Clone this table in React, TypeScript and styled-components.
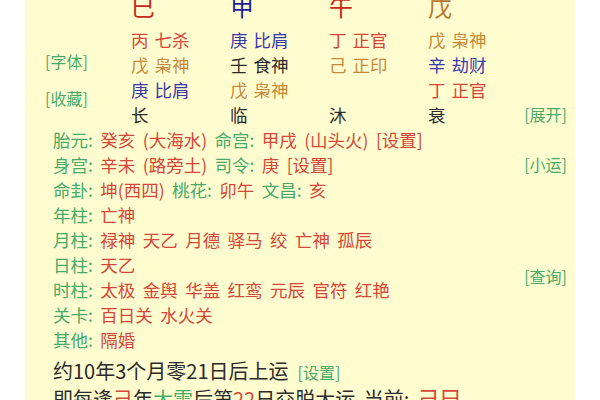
import React from "react";
import styled, { createGlobalStyle } from "styled-components";

const Global = createGlobalStyle`
  html, body { margin: 0; padding: 0; background: #ffffff; overflow: hidden; }
  body { font-family: "Noto Sans CJK SC", "Noto Sans", sans-serif; }
`;

const C = {
  red: "#d4473a",
  green: "#47aa6a",
  blue: "#3a3aa8",
  brown: "#c6893a",
  dark: "#2b2b2b",
  bigRed: "#c9281c",
  bigBlue: "#1d1f9a",
  bigBrown: "#b8782c",
};

const Panel = styled.div`
  width: 550px;
  height: 100vh;
  margin: 0 auto;
  background: #fffdd0;
  overflow: hidden;
  box-sizing: border-box;
`;

const PillarGrid = styled.div`
  display: grid;
  grid-template-columns: 86px 99px 99px 99px 1fr;
  grid-template-rows: 37px repeat(4, 25px);
  margin-top: -10px;
  padding: 0 8px 0 20px;
`;

const BigChar = styled.div<{ $color: string; $col: number }>`
  grid-row: 1;
  grid-column: ${(p) => p.$col};
  align-self: start;
  font-size: 24px;
  line-height: 32px;
  color: ${(p) => p.$color};
`;

const Cell = styled.div<{ $color: string; $col: number; $row: number }>`
  grid-row: ${(p) => p.$row};
  grid-column: ${(p) => p.$col};
  font-size: 17.5px;
  line-height: 25px;
  word-spacing: 2px;
  color: ${(p) => p.$color};
  white-space: pre;
`;

const SideLinks = styled.div`
  grid-column: 1;
  grid-row: 2 / span 4;
  display: flex;
  flex-direction: column;
  gap: 12px;
  padding-top: 22px;
`;

const LinkText = styled.span<{ $color?: string }>`
  font-size: 16px;
  line-height: 25px;
  color: ${(p) => p.$color || C.green};
`;

const ExpandLink = styled(LinkText)`
  grid-column: 5;
  grid-row: 5;
  justify-self: end;
`;

const InfoArea = styled.div`
  display: flex;
  padding: 0 8px 0 28px;
`;

const InfoLines = styled.div`
  flex: 1;
  display: flex;
  flex-direction: column;
`;

const RightLinks = styled.div`
  display: flex;
  flex-direction: column;
  align-items: flex-end;
  padding-top: 25px;
  gap: 87px;
`;

const Line = styled.div`
  font-size: 17.5px;
  line-height: 25px;
  word-spacing: 3.5px;
  white-space: pre;
  color: ${C.red};
`;

const Label = styled.span`
  color: ${C.green};
`;

const Value = styled.span`
  color: ${C.red};
`;

const BottomLine = styled.div<{ $first?: boolean }>`
  font-size: 20px;
  line-height: 25px;
  word-spacing: 4px;
  white-space: pre;
  color: ${C.dark};
  margin-top: ${(p) => (p.$first ? "6px" : "0")};
`;

const Tone = styled.span<{ $color: string; $big?: boolean }>`
  color: ${(p) => p.$color};
  font-size: ${(p) => (p.$big ? "22px" : "inherit")};
`;

const SetLink = styled.span`
  color: ${C.green};
  font-size: 16px;
  margin-left: 9px;
`;

const bigChars = [
  { ch: "巳", color: C.bigRed },
  { ch: "甲", color: C.bigBlue },
  { ch: "午", color: C.bigRed },
  { ch: "戊", color: C.bigBrown },
];

const cells: { t: string; c: string; col: number; row: number }[] = [
  { t: "丙 七杀", c: C.red, col: 2, row: 2 },
  { t: "戊 枭神", c: C.brown, col: 2, row: 3 },
  { t: "庚 比肩", c: C.blue, col: 2, row: 4 },
  { t: "长", c: C.dark, col: 2, row: 5 },
  { t: "庚 比肩", c: C.blue, col: 3, row: 2 },
  { t: "壬 食神", c: C.dark, col: 3, row: 3 },
  { t: "戊 枭神", c: C.brown, col: 3, row: 4 },
  { t: "临", c: C.dark, col: 3, row: 5 },
  { t: "丁 正官", c: C.red, col: 4, row: 2 },
  { t: "己 正印", c: C.brown, col: 4, row: 3 },
  { t: "沐", c: C.dark, col: 4, row: 5 },
  { t: "戊 枭神", c: C.brown, col: 5, row: 2 },
  { t: "辛 劫财", c: C.blue, col: 5, row: 3 },
  { t: "丁 正官", c: C.red, col: 5, row: 4 },
  { t: "衰", c: C.dark, col: 5, row: 5 },
];

type Seg = [string, string];
const info: Seg[][] = [
  [["l", "胎元: "], ["v", "癸亥 (大海水) "], ["l", "命宫: "], ["v", "甲戌 (山头火) [设置]"]],
  [["l", "身宫: "], ["v", "辛未 (路旁土) "], ["l", "司令: "], ["v", "庚 [设置]"]],
  [["l", "命卦: "], ["v", "坤(西四) "], ["l", "桃花: "], ["v", "卯午 "], ["l", "文昌: "], ["v", "亥"]],
  [["l", "年柱: "], ["v", "亡神"]],
  [["l", "月柱: "], ["v", "禄神 天乙 月德 驿马 绞 亡神 孤辰"]],
  [["l", "日柱: "], ["v", "天乙"]],
  [["l", "时柱: "], ["v", "太极 金舆 华盖 红鸾 元辰 官符 红艳"]],
  [["l", "关卡: "], ["v", "百日关 水火关"]],
  [["l", "其他: "], ["v", "隔婚"]],
];

export default function App() {
  return (
    <>
      <Global />
      <Panel>
        <PillarGrid>
          {bigChars.map((b, i) => (
            <BigChar key={b.ch} $color={b.color} $col={i + 2}>
              {b.ch}
            </BigChar>
          ))}
          <SideLinks>
            <LinkText>[字体]</LinkText>
            <LinkText>[收藏]</LinkText>
          </SideLinks>
          {cells.map((c, i) => (
            <Cell key={i} $color={c.c} $col={c.col} $row={c.row}>
              {c.t}
            </Cell>
          ))}
          <ExpandLink>[展开]</ExpandLink>
        </PillarGrid>
        <InfoArea>
          <InfoLines>
            {info.map((segs, i) => (
              <Line key={i}>
                {segs.map(([k, t], j) =>
                  k === "l" ? <Label key={j}>{t}</Label> : <Value key={j}>{t}</Value>
                )}
              </Line>
            ))}
            <BottomLine $first>
              约10年3个月零21日后上运<SetLink>[设置]</SetLink>
            </BottomLine>
            <BottomLine>
              即每逢<Tone $color={C.red}>己</Tone>年<Tone $color={C.green}>大雪</Tone>后第
              <Tone $color={C.red}>22</Tone>日交脱大运 当前: <Tone $color={C.red} $big>己巳</Tone>
            </BottomLine>
          </InfoLines>
          <RightLinks>
            <LinkText>[小运]</LinkText>
            <LinkText>[查询]</LinkText>
          </RightLinks>
        </InfoArea>
      </Panel>
    </>
  );
}
